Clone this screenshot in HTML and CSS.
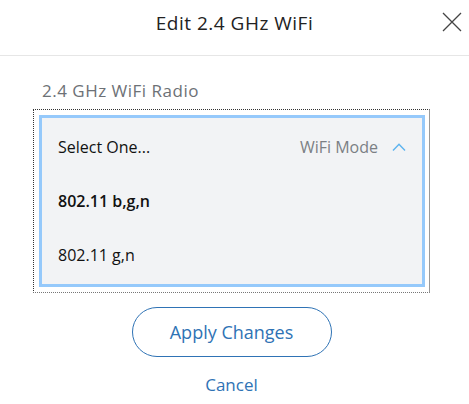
FILE: index.html
```html
<!DOCTYPE html>
<html lang="en">
<head>
    <meta charset="UTF-8">
    <title>Edit 2.4 GHz WiFi</title>
    <link rel="stylesheet" href="styles.css">
</head>
<body>
    <div class="modal">
        <div class="modal-header">
            <h1>Edit 2.4 GHz WiFi</h1>
            <button class="close-btn" aria-label="Close">
                <svg width="20" height="20" viewBox="0 0 20 20">
                    <path d="M1 1 L19 19 M19 1 L1 19" stroke="#444" stroke-width="1.3" fill="none"/>
                </svg>
            </button>
        </div>

        <div class="modal-body">
            <label class="field-label">2.4 GHz WiFi Radio</label>

            <div class="select-focus">
                <div class="select-box">
                    <div class="select-row select-head">
                        <span>Select One...</span>
                        <span class="select-meta">
                            WiFi Mode
                            <svg width="14" height="8" viewBox="0 0 14 8">
                                <path d="M1 7.5 L7 1.2 L13 7.5" stroke="#5db3ef" stroke-width="1.4" fill="none"/>
                            </svg>
                        </span>
                    </div>
                    <div class="select-row option selected">802.11 b,g,n</div>
                    <div class="select-row option">802.11 g,n</div>
                </div>
            </div>

            <div class="actions">
                <button class="btn-apply">Apply Changes</button>
                <a class="btn-cancel" href="#">Cancel</a>
            </div>
        </div>
    </div>
</body>
</html>
```

FILE: styles.css
```css
* {
    margin: 0;
    padding: 0;
    box-sizing: border-box;
}
body {
    font-family: 'Open Sans', 'Noto Sans', sans-serif;
    background-color: white;
    color: #222;
}
.modal-header {
    position: relative;
    height: 56px;
    border-bottom: 1px solid #e6e6e6;
    display: flex;
    justify-content: center;
    align-items: center;
}
.modal-header h1 {
    font-size: 19px;
    letter-spacing: 0.5px;
    font-weight: 400;
    color: #222;
    margin-top: -9px;
}
.close-btn {
    position: absolute;
    right: 6px;
    top: 12px;
    background: none;
    border: none;
    cursor: pointer;
    width: 22px;
    height: 22px;
}
.modal-body {
    padding: 23px 39px 0 33px;
}
.field-label {
    display: block;
    font-size: 17px;
    letter-spacing: 0.5px;
    color: #6d7176;
    padding-left: 9px;
    margin-bottom: 7px;
}
.select-focus {
    border: 1px dotted #333;
    border-right: 1px solid #999;
    border-bottom-color: #777;
    padding: 5px 4px 5px 5px;
}
.select-box {
    background-color: #f2f3f5;
    border: 3px solid #95c9fb;
    padding: 2px 0;
}
.select-row {
    height: 54px;
    display: flex;
    align-items: center;
    justify-content: space-between;
    padding: 0 16px;
    font-size: 16px;
    color: #111;
}
.select-meta {
    display: flex;
    align-items: center;
    gap: 14px;
    color: #7b7f84;
}
.option.selected {
    font-weight: 600;
}
.actions {
    display: flex;
    flex-direction: column;
    align-items: center;
    margin-top: 14px;
}
.btn-apply {
    width: 200px;
    height: 50px;
    border: 1px solid #2f73b5;
    border-radius: 25px;
    background: white;
    color: #2f73b5;
    font-family: inherit;
    font-size: 18px;
    cursor: pointer;
}
.btn-cancel {
    margin-top: 16px;
    color: #2f73b5;
    font-size: 17px;
    text-decoration: none;
}
```
